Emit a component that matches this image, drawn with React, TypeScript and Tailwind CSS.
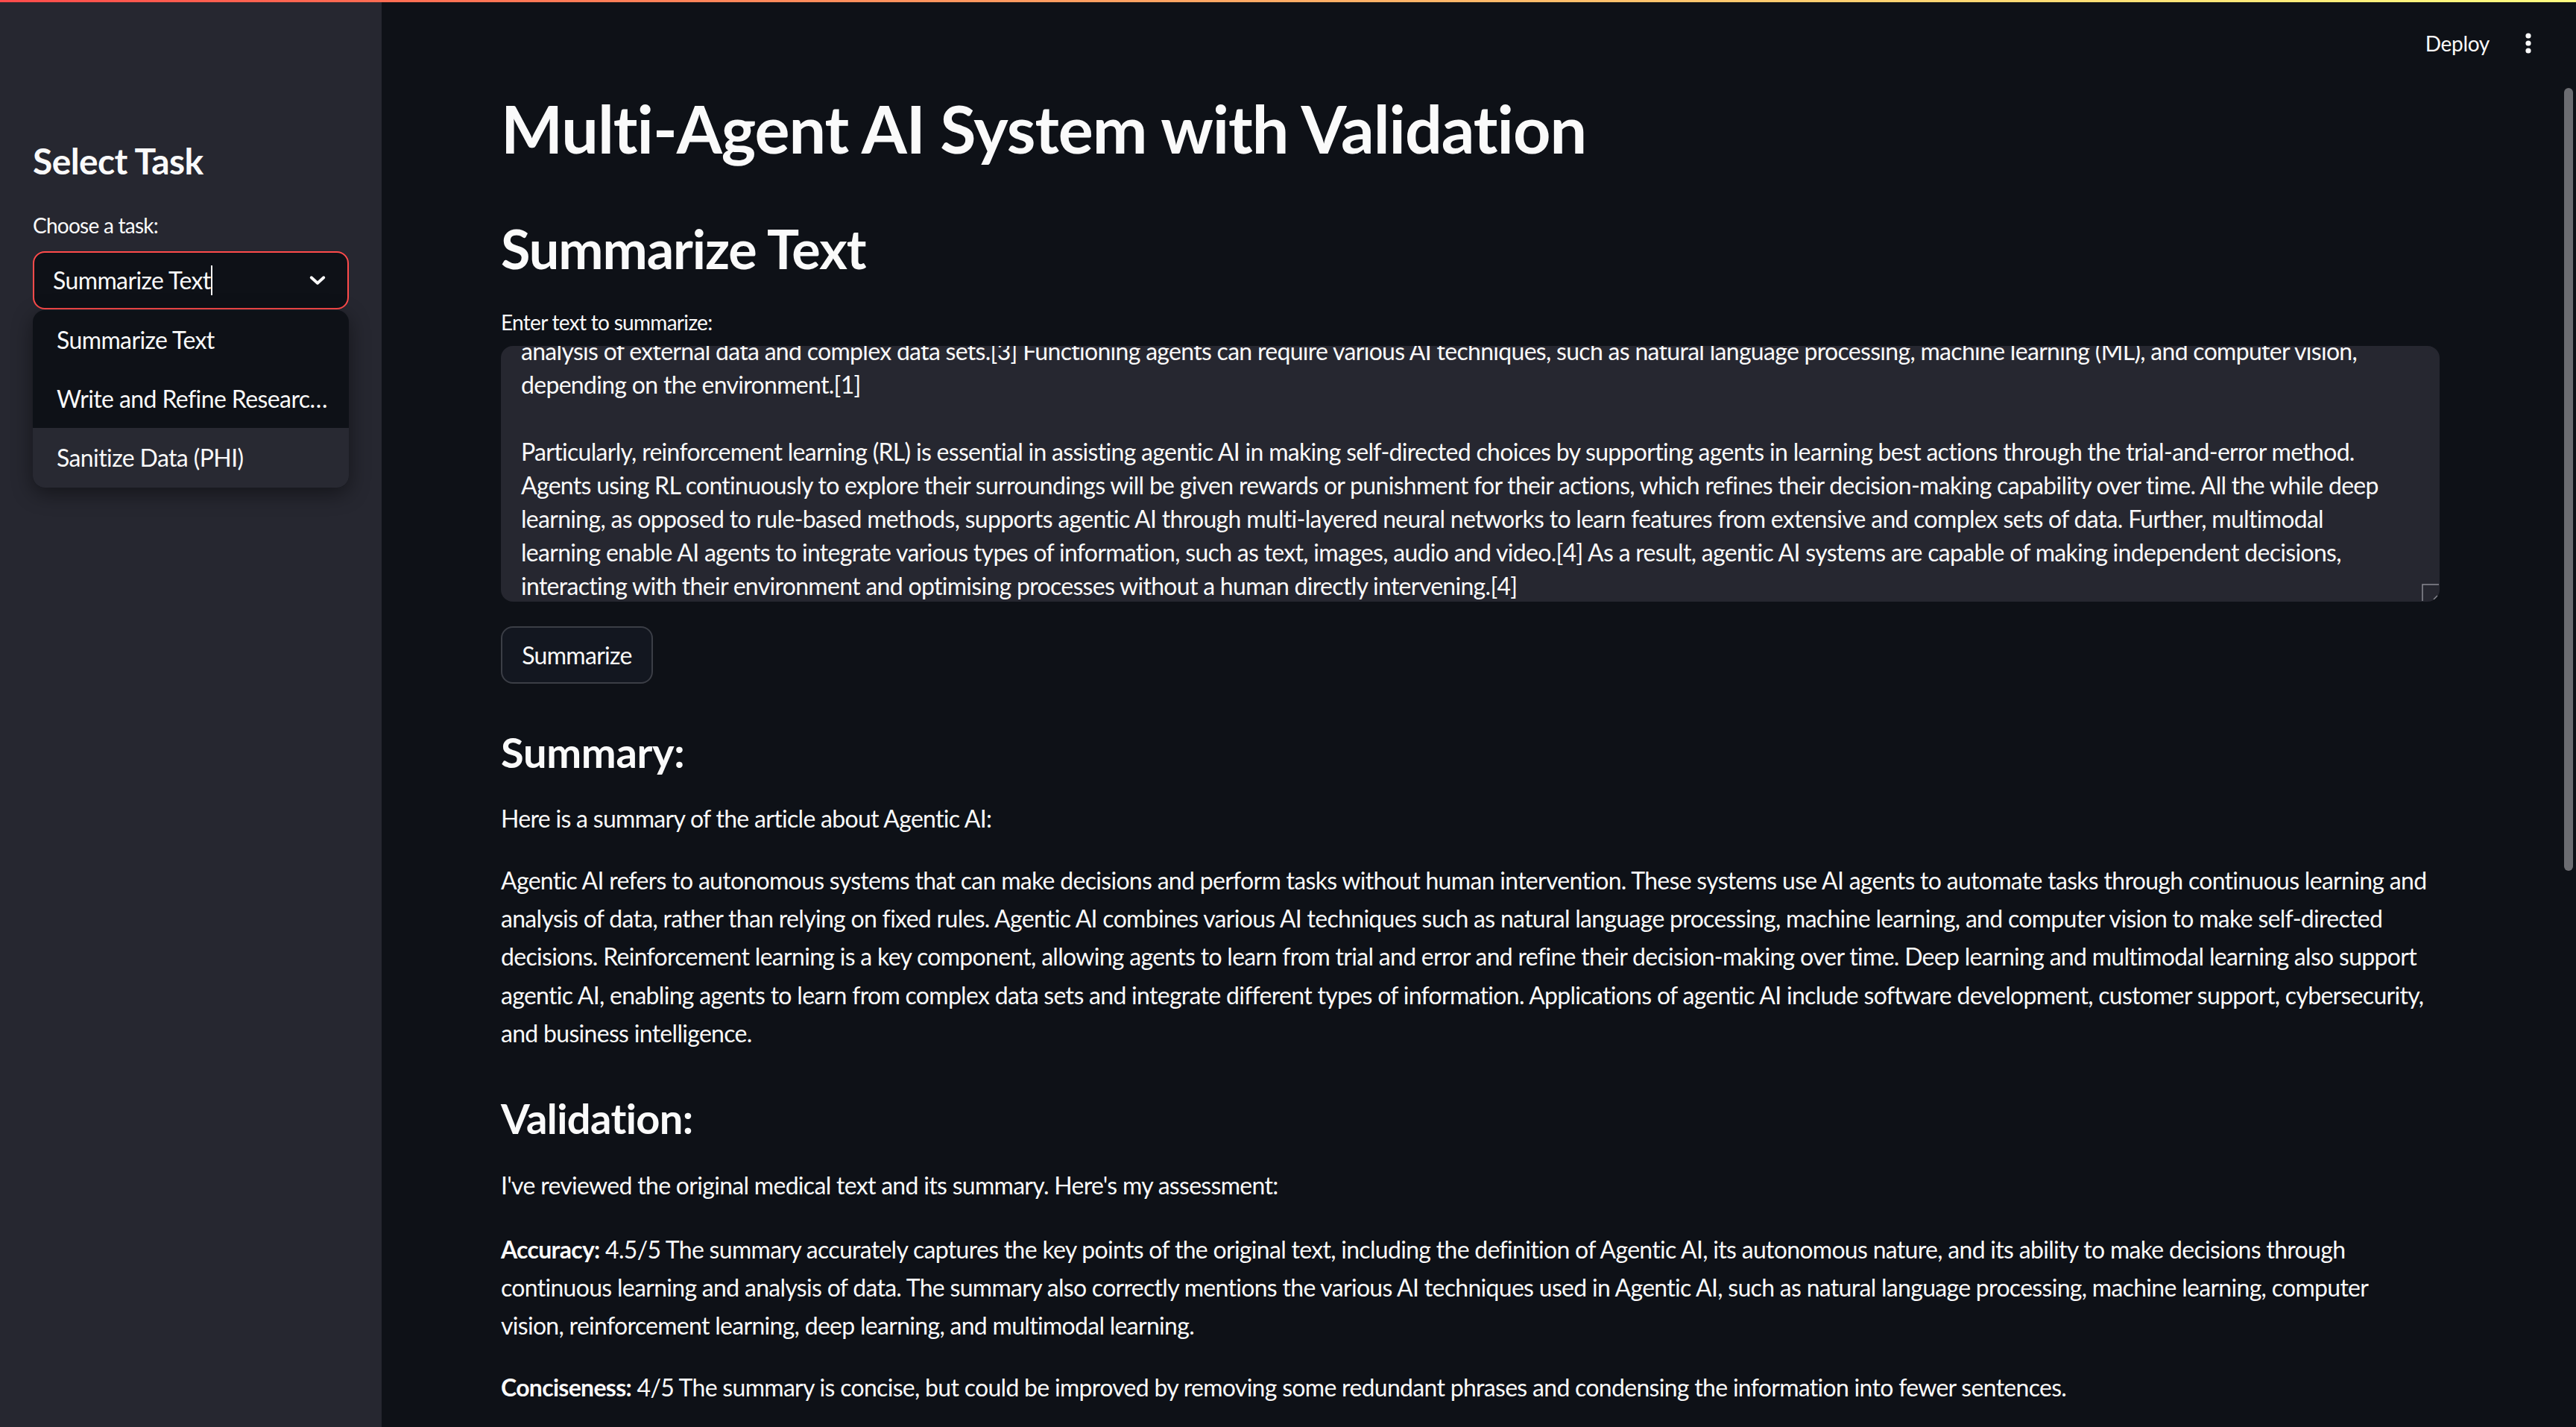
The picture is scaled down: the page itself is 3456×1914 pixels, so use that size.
import React from 'react';

const textareaLines = [
    'analysis of external data and complex data sets.[3] Functioning agents can require various AI techniques, such as natural language processing, machine learning (ML), and computer vision,',
    'depending on the environment.[1]',
    '',
    'Particularly, reinforcement learning (RL) is essential in assisting agentic AI in making self-directed choices by supporting agents in learning best actions through the trial-and-error method.',
    'Agents using RL continuously to explore their surroundings will be given rewards or punishment for their actions, which refines their decision-making capability over time. All the while deep',
    'learning, as opposed to rule-based methods, supports agentic AI through multi-layered neural networks to learn features from extensive and complex sets of data. Further, multimodal',
    'learning enable AI agents to integrate various types of information, such as text, images, audio and video.[4] As a result, agentic AI systems are capable of making independent decisions,',
    'interacting with their environment and optimising processes without a human directly intervening.[4]',
];

const summaryLines = [
    'Agentic AI refers to autonomous systems that can make decisions and perform tasks without human intervention. These systems use AI agents to automate tasks through continuous learning and',
    'analysis of data, rather than relying on fixed rules. Agentic AI combines various AI techniques such as natural language processing, machine learning, and computer vision to make self-directed',
    'decisions. Reinforcement learning is a key component, allowing agents to learn from trial and error and refine their decision-making over time. Deep learning and multimodal learning also support',
    'agentic AI, enabling agents to learn from complex data sets and integrate different types of information. Applications of agentic AI include software development, customer support, cybersecurity,',
    'and business intelligence.',
];

const accuracyLines = [
    'continuous learning and analysis of data. The summary also correctly mentions the various AI techniques used in Agentic AI, such as natural language processing, machine learning, computer',
    'vision, reinforcement learning, deep learning, and multimodal learning.',
];

const options = ['Summarize Text', 'Write and Refine Researc…', 'Sanitize Data (PHI)'];

const App = () => {
    return (
        <div className="relative flex w-[3456px] h-[1914px] overflow-hidden bg-[#0e1117] text-[#fafafa] font-['Lato','Liberation_Sans',sans-serif]">
            {/* top decoration */}
            <div className="absolute top-0 left-0 w-full h-[3px] bg-linear-to-r from-[#ff4b4b] to-[#fffd80] z-10" />

            {/* Sidebar */}
            <aside className="w-[512px] shrink-0 bg-[#262730] px-[44px] pt-[187px] tracking-[-0.6px]">
                <h2 className="text-[48px] leading-[58px] font-bold tracking-[-0.6px]">Select Task</h2>
                <div className="mt-[37px] text-[28px] leading-[40px] tracking-[-0.75px]">Choose a task:</div>
                <div className="mt-[15px] h-[78px] rounded-[16px] border-2 border-[#ff4b4b] bg-[#0e1117] flex items-center pl-[25px] pr-[22px]">
                    <span className="text-[32px] leading-[40px]">Summarize Text</span>
                    <span className="w-[2px] h-[40px] bg-[#fafafa]" />
                    <svg className="ml-auto" width="36" height="36" viewBox="0 0 24 24" fill="none" stroke="#fafafa" strokeWidth="2.6" strokeLinecap="round" strokeLinejoin="round">
                        <path d="M6.5 9.5L12 14.5L17.5 9.5" />
                    </svg>
                </div>
                <div className="mt-[1px] rounded-[16px] overflow-hidden bg-[#0e1117] shadow-[0_8px_28px_rgba(0,0,0,0.45)]">
                    {options.map((opt, i) => (
                        <div
                            key={i}
                            className={`h-[79px] flex items-center pl-[32px] text-[32px] whitespace-nowrap ${i === 2 ? 'bg-[#282932] h-[80px]' : ''}`}
                        >
                            {opt}
                        </div>
                    ))}
                </div>
            </aside>

            {/* Main */}
            <main className="flex-1 flex flex-col">
                <header className="h-[116px] shrink-0 flex items-center justify-end pr-[60px] gap-[48px]">
                    <span className="text-[28px] tracking-[-0.3px]">Deploy</span>
                    <svg width="8" height="28" viewBox="0 0 8 28" fill="#fafafa">
                        <circle cx="4" cy="4" r="3.6" />
                        <circle cx="4" cy="14" r="3.6" />
                        <circle cx="4" cy="24" r="3.6" />
                    </svg>
                </header>

                <div className="ml-[160px] w-[2601px] tracking-[-0.7px]">
                    <h1 className="mt-[3px] text-[88px] leading-[106px] font-bold tracking-[-1px]">Multi-Agent AI System with Validation</h1>
                    <h2 className="mt-[65px] text-[72px] leading-[86px] font-bold tracking-[-1.1px]">Summarize Text</h2>
                    <div className="mt-[36px] text-[28px] leading-[40px]">Enter text to summarize:</div>

                    <div className="relative mt-[12px] h-[343px] rounded-[16px] bg-[#262730] overflow-hidden pl-[27px]">
                        <div className="-mt-[16px] text-[32px] leading-[45px]">
                            {textareaLines.map((line, i) =>
                                line ? (
                                    <div key={i} className="whitespace-nowrap">{line}</div>
                                ) : (
                                    <div key={i} className="h-[45px]" />
                                )
                            )}
                        </div>
                        <svg className="absolute right-0 bottom-0" width="24" height="24" viewBox="0 0 24 24" fill="none">
                            <path d="M1 23V1H23" stroke="#8a8b92" strokeWidth="1.5" />
                            <path d="M16 21L21 16" stroke="#8a8b92" strokeWidth="1.5" />
                        </svg>
                    </div>

                    <button className="mt-[33px] w-[204px] h-[77px] rounded-[16px] border-2 border-[#3b3e46] bg-[#131720] text-[32px] flex items-center justify-center">
                        Summarize
                    </button>

                    <h3 className="mt-[58px] text-[56px] leading-[68px] font-bold tracking-[-0.3px]">Summary:</h3>
                    <p className="mt-[29px] text-[32px] leading-[51px]">Here is a summary of the article about Agentic AI:</p>
                    <div className="mt-[32px] text-[32px] leading-[51.2px]">
                        {summaryLines.map((line, i) => (
                            <div key={i} className="whitespace-nowrap">{line}</div>
                        ))}
                    </div>

                    <h3 className="mt-[55px] text-[56px] leading-[68px] font-bold tracking-[-0.6px]">Validation:</h3>
                    <p className="mt-[30px] text-[32px] leading-[51px]">I've reviewed the original medical text and its summary. Here's my assessment:</p>
                    <div className="mt-[35px] text-[32px] leading-[51.2px]">
                        <div className="whitespace-nowrap">
                            <b className="font-bold">Accuracy:</b> 4.5/5 The summary accurately captures the key points of the original text, including the definition of Agentic AI, its autonomous nature, and its ability to make decisions through
                        </div>
                        {accuracyLines.map((line, i) => (
                            <div key={i} className="whitespace-nowrap">{line}</div>
                        ))}
                    </div>
                    <div className="mt-[31px] text-[32px] leading-[51.2px] whitespace-nowrap">
                        <b className="font-bold">Conciseness:</b> 4/5 The summary is concise, but could be improved by removing some redundant phrases and condensing the information into fewer sentences.
                    </div>
                </div>
            </main>

            {/* page scrollbar */}
            <div className="absolute right-[4px] top-[118px] w-[12px] h-[1050px] rounded-full bg-[#6c6d72]" />
        </div>
    );
};

export default App;
